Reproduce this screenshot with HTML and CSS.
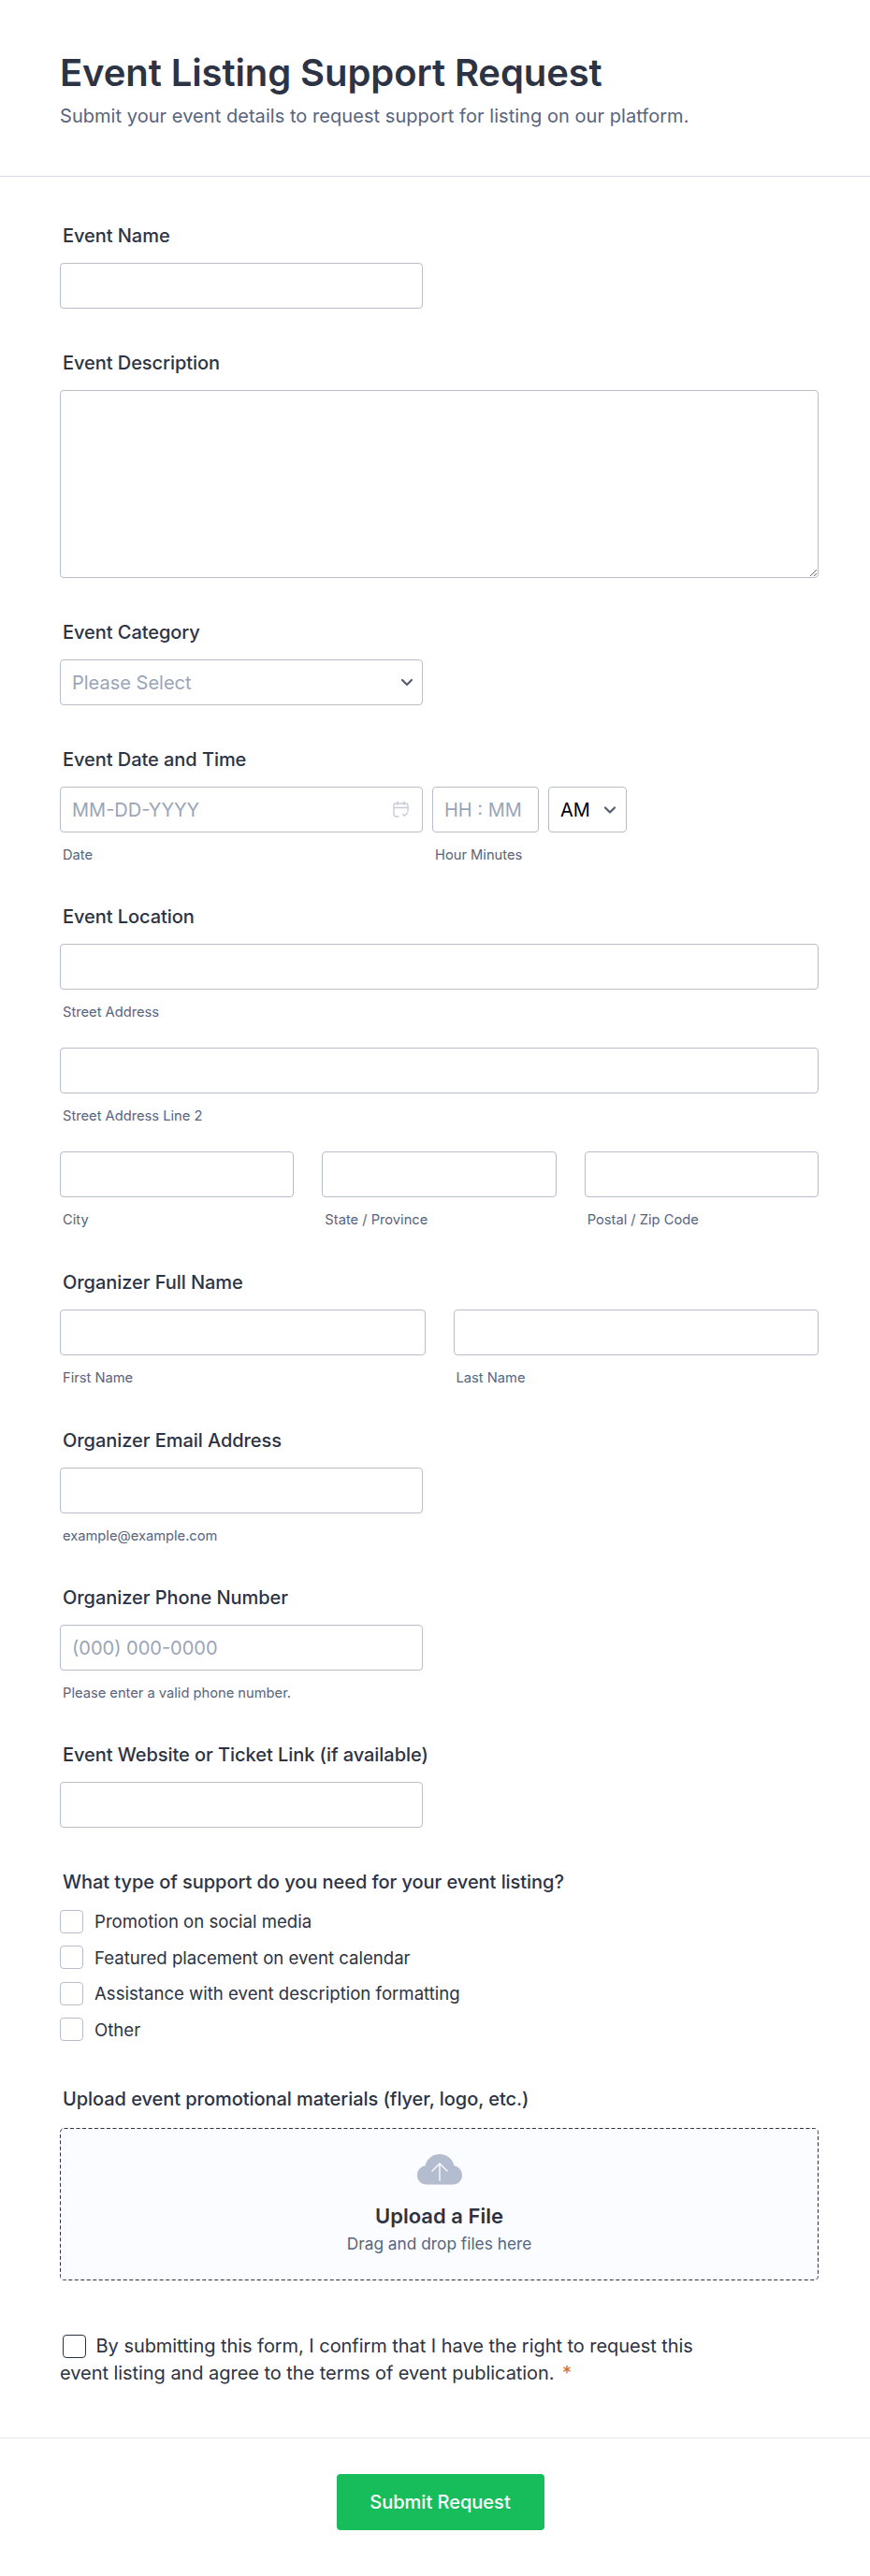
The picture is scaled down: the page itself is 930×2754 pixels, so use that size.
FILE: index.html
```html
<!DOCTYPE html>
<html>
<head>
<meta name="viewport" content="width=device-width, initial-scale=1">
<title>Event Listing Support Request</title>
<link rel="stylesheet" href="styles.css">
</head>
<body>

<header class="form-header">
	<h1>Event Listing Support Request</h1>
	<p>Submit your event details to request support for listing on our platform.</p>
</header>

<form class="form-body">

	<div class="field">
		<label class="field-label">Event Name</label>
		<input class="text-input half" type="text">
	</div>

	<div class="field">
		<label class="field-label">Event Description</label>
		<textarea class="text-area"></textarea>
	</div>

	<div class="field">
		<label class="field-label">Event Category</label>
		<div class="select-wrap half">
			<select class="text-input placeholder-select"><option>Please Select</option></select>
			<svg class="chevron" width="14" height="9" viewBox="0 0 14 9"><path d="M2 2l5 5 5-5" fill="none" stroke="#565d73" stroke-width="2.200" stroke-linecap="round" stroke-linejoin="round"/></svg>
		</div>
	</div>

	<div class="field">
		<label class="field-label">Event Date and Time</label>
		<div class="date-row">
			<div class="date-col">
				<div class="select-wrap">
					<input class="text-input" type="text" placeholder="MM-DD-YYYY">
					<svg class="cal-icon" width="17" height="18" viewBox="0 0 17 18" fill="none" stroke="#c5cad6" stroke-width="1.300" stroke-linecap="round" stroke-linejoin="round"><path d="M6 17H3a2 2 0 0 1-2-2V5a2 2 0 0 1 2-2h11a2 2 0 0 1 2 2v6"/><path d="M1 7.500h15M5 1v3.500M12 1v3.500"/><path d="M10.500 14.500l1.800 1.800 3.200-3.300"/></svg>
				</div>
				<div class="sub-label">Date</div>
			</div>
			<div class="time-col">
				<input class="text-input" type="text" placeholder="HH : MM">
				<div class="sub-label">Hour Minutes</div>
			</div>
			<div class="ampm-col">
				<div class="select-wrap">
					<select class="text-input ampm-select"><option>AM</option></select>
					<svg class="chevron small" width="14" height="8" viewBox="0 0 14 8"><path d="M2 1.500L7 6.500l5-5" fill="none" stroke="#565d73" stroke-width="2.200" stroke-linecap="round" stroke-linejoin="round"/></svg>
				</div>
			</div>
		</div>
	</div>

	<div class="field wide-gap">
		<label class="field-label">Event Location</label>
		<div class="address-row">
			<input class="text-input" type="text">
			<div class="sub-label">Street Address</div>
		</div>
		<div class="address-row">
			<input class="text-input" type="text">
			<div class="sub-label">Street Address Line 2</div>
		</div>
		<div class="three-col">
			<div>
				<input class="text-input" type="text">
				<div class="sub-label">City</div>
			</div>
			<div>
				<input class="text-input" type="text">
				<div class="sub-label">State / Province</div>
			</div>
			<div>
				<input class="text-input" type="text">
				<div class="sub-label">Postal / Zip Code</div>
			</div>
		</div>
	</div>

	<div class="field wide-gap">
		<label class="field-label">Organizer Full Name</label>
		<div class="two-col">
			<div>
				<input class="text-input" type="text">
				<div class="sub-label">First Name</div>
			</div>
			<div>
				<input class="text-input" type="text">
				<div class="sub-label">Last Name</div>
			</div>
		</div>
	</div>

	<div class="field">
		<label class="field-label">Organizer Email Address</label>
		<input class="text-input half" type="text">
		<div class="sub-label">example@example.com</div>
	</div>

	<div class="field">
		<label class="field-label">Organizer Phone Number</label>
		<input class="text-input half" type="text" placeholder="(000) 000-0000">
		<div class="sub-label">Please enter a valid phone number.</div>
	</div>

	<div class="field">
		<label class="field-label">Event Website or Ticket Link (if available)</label>
		<input class="text-input half" type="text">
	</div>

	<div class="field checks-field">
		<label class="field-label tight">What type of support do you need for your event listing?</label>
		<label class="check-row"><input class="check-box" type="checkbox">Promotion on social media</label>
		<label class="check-row"><input class="check-box" type="checkbox">Featured placement on event calendar</label>
		<label class="check-row"><input class="check-box" type="checkbox">Assistance with event description formatting</label>
		<label class="check-row"><input class="check-box" type="checkbox">Other</label>
	</div>

	<div class="field upload-field">
		<label class="field-label upload-label">Upload event promotional materials (flyer, logo, etc.)</label>
		<div class="drop-zone">
			<svg class="dash-frame" width="811" height="163"><rect x="0.500" y="0.500" width="810" height="162" rx="4" fill="none" stroke="#2c3345" stroke-dasharray="4 2.500"/></svg>
			<svg class="cloud" width="48" height="33" viewBox="0 0 48 33"><path d="M10 32.500C4 32.500 0 28 0 22.500 0 17 4 13 8.500 12.500 10 5.500 16 0 24 0s14 5.500 15.500 12.500C44 13 48 17 48 22.500 48 28 44 32.500 38 32.500z" fill="#b4bccf"/><path d="M24 28V10M16 18l8-8 8 8" fill="none" stroke="#fbfcff" stroke-width="1.400" stroke-linecap="round" stroke-linejoin="round"/></svg>
			<div class="drop-title">Upload a File</div>
			<div class="drop-text">Drag and drop files here</div>
		</div>
	</div>

	<div class="consent">
		<input class="consent-box" type="checkbox"> By submitting this form, I confirm that I have the right to request this event listing and agree to the terms of event publication. <span class="required">*</span>
	</div>

</form>

<footer class="form-footer">
	<button class="submit-btn" type="button">Submit Request</button>
</footer>

</body>
</html>
```

FILE: styles.css
```css
* {
	box-sizing: border-box;
}

body {
	margin: 0;
	height: 2754px;
	background: #fff;
	color: #2c3345;
	font-family: Inter, "Liberation Sans", sans-serif;
}

.form-header {
	height: 189px;
	padding: 54px 64px 0;
	border-bottom: 1px solid #d8dae9;
}

.form-header h1 {
	margin: 0;
	font-size: 40px;
	line-height: 48px;
	font-weight: 600;
	letter-spacing: -0.1px;
	color: #2c3345;
}

.form-header p {
	margin: 8px 0 0;
	font-size: 20px;
	line-height: 28px;
	letter-spacing: 0.05px;
	color: #57647e;
}

.form-body {
	padding: 49px 55px 0 64px;
}

.field {
	margin-bottom: 44px;
}

.wide-gap {
	margin-bottom: 45px;
}

.checks-field {
	margin-bottom: 41px;
}

.field-label {
	display: block;
	margin: 0 0 15px 3px;
	font-size: 20px;
	line-height: 28px;
	font-weight: 450;
	letter-spacing: -0.05px;
	color: #2c3345;
}

.field-label.tight {
	margin-bottom: 9px;
}

.field-label.upload-label {
	margin-bottom: 17px;
}

.text-input {
	display: block;
	width: 100%;
	height: 49px;
	padding: 0 12px;
	background: #fff;
	border: 1px solid #b8bdc9;
	border-radius: 4px;
	font-family: Inter, "Liberation Sans", sans-serif;
	font-size: 20px;
	color: #2c3345;
	outline: none;
	appearance: none;
}

.text-input::placeholder {
	color: #9aa5b8;
	opacity: 1;
}

.half {
	width: 388px;
}

.text-area {
	display: block;
	width: 100%;
	height: 201px;
	border: 1px solid #b8bdc9;
	border-radius: 4px;
	outline: none;
}

.select-wrap {
	position: relative;
}

.placeholder-select {
	color: #9aa5b8;
}

.ampm-select {
	color: #000;
}

.chevron {
	position: absolute;
	right: 10px;
	top: 20px;
}

.chevron.small {
	right: 11px;
	top: 21px;
}

.cal-icon {
	position: absolute;
	right: 15px;
	top: 15px;
}

.sub-label {
	margin: 16px 0 0 3px;
	font-size: 14.700px;
	line-height: 16px;
	color: #57647e;
}

.date-row {
	display: flex;
	gap: 10px;
}

.date-col {
	width: 388px;
}

.time-col {
	width: 114px;
}

.ampm-col {
	width: 84px;
}

.address-row {
	margin-bottom: 30px;
}

.three-col {
	display: grid;
	grid-template-columns: 1fr 1fr 1fr;
	gap: 30px;
}

.two-col {
	display: grid;
	grid-template-columns: 1fr 1fr;
	gap: 30px;
}

.check-row {
	display: flex;
	align-items: center;
	height: 38.500px;
	font-size: 18.600px;
	color: #2c3345;
}

.check-box {
	width: 25px;
	height: 25px;
	margin: 0 12px 0 0;
	background: #fff;
	border: 1px solid #b8bdc9;
	border-radius: 4px;
	appearance: none;
}

.drop-zone {
	position: relative;
	display: flex;
	flex-direction: column;
	align-items: center;
	height: 163px;
	padding-top: 28px;
	background: #fbfcff;
	border-radius: 4px;
}

.dash-frame {
	position: absolute;
	left: 0;
	top: 0;
}

.drop-title {
	margin-top: 19px;
	font-size: 22px;
	line-height: 28px;
	font-weight: 600;
}

.drop-text {
	margin-top: 4px;
	font-size: 17.300px;
	line-height: 24px;
	color: #57647e;
}

.upload-field {
	margin-bottom: 56px;
}

.consent {
	width: 690px;
	font-size: 20px;
	line-height: 29px;
	letter-spacing: -0.05px;
	color: #2c3345;
}

.consent-box {
	width: 25px;
	height: 25px;
	margin: 0 5px 0 3px;
	vertical-align: -6px;
	background: #fff;
	border: 1.500px solid #2c3345;
	border-radius: 4px;
	appearance: none;
}

.required {
	color: #d86a27;
	margin-left: 3px;
}

.form-footer {
	display: flex;
	justify-content: center;
	margin-top: 54px;
	padding-top: 38px;
	padding-left: 11px;
	border-top: 1px solid #e3e5f0;
}

.submit-btn {
	width: 222px;
	height: 60px;
	background: #18bd5b;
	border: 0;
	border-radius: 4px;
	color: #fff;
	font-family: Inter, "Liberation Sans", sans-serif;
	font-size: 20px;
	font-weight: 500;
}
```
